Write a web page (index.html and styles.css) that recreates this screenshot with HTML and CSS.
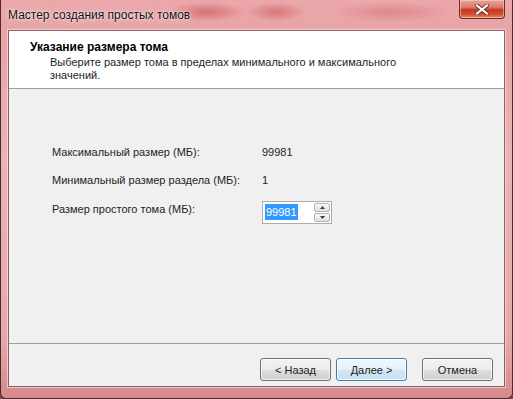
FILE: index.html
```html
<!DOCTYPE html>
<html lang="ru">
<head>
<meta charset="utf-8">
<title>Мастер создания простых томов</title>
<link rel="stylesheet" href="styles.css">
</head>
<body>
<div class="window">
  <div class="titlebar">
    <span class="title-text">Мастер создания простых томов</span>
    <button class="close-btn" aria-label="Закрыть">
      <svg width="14" height="11" viewBox="0 0 14 11"><path d="M2 1.5 L12 9.5 M12 1.5 L2 9.5" stroke="#5a2020" stroke-width="3.6" stroke-linecap="square"/><path d="M2 1.5 L12 9.5 M12 1.5 L2 9.5" stroke="#ffffff" stroke-width="2.2" stroke-linecap="square"/></svg>
    </button>
  </div>
  <div class="client">
    <div class="header">
      <div class="header-title">Указание размера тома</div>
      <div class="header-sub">Выберите размер тома в пределах минимального и максимального значений.</div>
    </div>
    <div class="content">
      <div class="form-grid">
        <div class="label">Максимальный размер (МБ):</div>
        <div class="value">99981</div>
        <div class="label">Минимальный размер раздела (МБ):</div>
        <div class="value">1</div>
        <div class="label label-input">Размер простого тома (МБ):</div>
        <div class="spin">
          <div class="spin-field"><span class="selected">99981</span></div>
          <div class="spin-buttons">
            <div class="spin-btn"><svg width="5" height="3" viewBox="0 0 5 3"><path d="M0 3 L2.5 0 L5 3 Z" fill="#3b3b3b"/></svg></div>
            <div class="spin-btn"><svg width="5" height="3" viewBox="0 0 5 3"><path d="M0 0 L2.5 3 L5 0 Z" fill="#3b3b3b"/></svg></div>
          </div>
        </div>
      </div>
    </div>
    <div class="footer">
      <button class="btn">&lt; Назад</button>
      <button class="btn btn-default">Далее &gt;</button>
      <button class="btn btn-cancel">Отмена</button>
    </div>
  </div>
</div>
</body>
</html>
```
FILE: styles.css
```css
html, body {
  margin: 0;
  padding: 0;
  width: 513px;
  height: 399px;
  overflow: hidden;
  background: #7a4a4c;
}

.window {
  box-sizing: border-box;
  width: 513px;
  height: 399px;
  border: 1px solid #4a2a2c;
  border-top: none;
  border-radius: 0 0 6px 6px;
  background:
    radial-gradient(ellipse 40px 10px at 205px 12px, rgba(200, 70, 75, 0.55), rgba(200, 70, 75, 0) 100%),
    radial-gradient(ellipse 30px 10px at 275px 12px, rgba(200, 70, 75, 0.5), rgba(200, 70, 75, 0) 100%),
    radial-gradient(ellipse 60px 10px at 390px 12px, rgba(200, 80, 85, 0.35), rgba(200, 80, 85, 0) 100%),
    linear-gradient(180deg, #eba7aa 0%, #e7a4a7 8%, #e9b4b6 40%, #e6a9ab 85%, #d5898c 100%);
  display: flex;
  flex-direction: column;
  padding: 0 7px 11px 7px;
  font-family: "Liberation Sans", Arial, sans-serif;
}

.titlebar {
  height: 30px;
  display: flex;
  align-items: flex-start;
  justify-content: space-between;
}

.title-text {
  margin-top: 8px;
  font-size: 12px;
  color: #111;
  text-shadow: 0 0 6px rgba(255, 255, 255, 0.8), 0 0 2px rgba(255, 255, 255, 0.9);
}

.close-btn {
  margin: 0;
  width: 46px;
  height: 19px;
  padding: 0;
  border: 1px solid #6b2c2c;
  border-top: none;
  border-radius: 0 0 4px 4px;
  background: linear-gradient(180deg, #e9a59a 0%, #dc7b6c 40%, #c7351f 55%, #d2502f 80%, #e48d66 100%);
  box-shadow: inset 0 0 0 1px rgba(255, 220, 210, 0.5);
  display: flex;
  align-items: center;
  justify-content: center;
}

.client {
  flex: 1;
  display: flex;
  flex-direction: column;
  background: #f0f0f0;
  border: 1px solid #8e5e61;
  box-shadow: 0 0 0 1px rgba(255, 235, 235, 0.6);
  font-size: 11px;
  color: #1e1e1e;
}

.header {
  background: #ffffff;
  border-bottom: 1px solid #a0a0a0;
  padding: 9px 10px 6px 21px;
  line-height: 13px;
}

.header-title {
  font-weight: bold;
  font-size: 12px;
  line-height: 15px;
  color: #000;
}

.header-sub {
  padding: 1px 0 0 20px;
  width: 360px;
  color: #1e1e1e;
}

.content {
  flex: 1;
  padding: 56px 0 0 43px;
}

.form-grid {
  display: grid;
  grid-template-columns: 210px auto;
  grid-template-rows: 14px 14px 23px;
  row-gap: 14px;
  line-height: 14px;
}

.label-input {
  margin-top: 1px;
}

.spin {
  display: flex;
  width: 70px;
  height: 23px;
  box-sizing: border-box;
  border: 1px solid #abadb3;
  background: #fff;
}

.spin-field {
  flex: 1;
  padding: 2px 0 0 2px;
}

.selected {
  display: inline-block;
  background: #3399ff;
  color: #fff;
  height: 16px;
  line-height: 16px;
  padding: 0 1px;
}

.spin-buttons {
  width: 16px;
  padding: 1px 1px 1px 0;
  display: flex;
  flex-direction: column;
  gap: 1px;
}

.spin-btn {
  flex: 1;
  box-sizing: border-box;
  border: 1px solid #b5b5b5;
  border-radius: 2px;
  background: linear-gradient(180deg, #f7f7f7 0%, #ececec 50%, #dedede 100%);
  display: flex;
  align-items: center;
  justify-content: center;
}

.footer {
  border-top: 1px solid #a0a0a0;
  padding: 14px 11px 5px 0;
  display: flex;
  justify-content: flex-end;
  gap: 5px;
}

.btn {
  width: 71px;
  height: 23px;
  margin: 0;
  padding: 0;
  font-family: "Liberation Sans", Arial, sans-serif;
  font-size: 11px;
  color: #1e1e1e;
  border: 1px solid #707070;
  border-radius: 3px;
  background: linear-gradient(180deg, #f3f3f3 0%, #ebebeb 50%, #dddddd 51%, #cfcfcf 100%);
  box-shadow: inset 0 0 0 1px rgba(255, 255, 255, 0.7);
}

.btn-default {
  border-color: #3c7fb1;
  background: linear-gradient(180deg, #f2f8fc 0%, #e6f1f8 50%, #d4e7f3 51%, #c7e0f0 100%);
  box-shadow: inset 0 0 0 1px rgba(255, 255, 255, 0.8);
}

.btn-cancel {
  margin-left: 10px;
}
```
